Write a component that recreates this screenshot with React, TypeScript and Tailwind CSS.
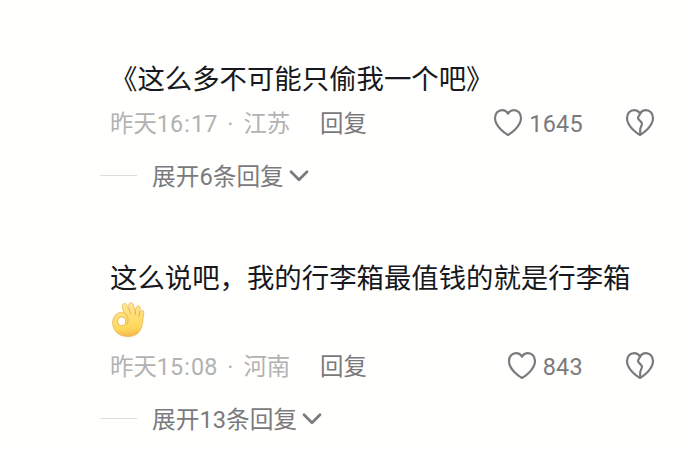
type Comment = {
  id: number;
  text: string;
  emoji?: boolean;
  hour: string;
  minute: string;
  region: string;
  likes: number;
  replies: number;
};

const comments: Comment[] = [
  {
    id: 1,
    text: "《这么多不可能只偷我一个吧》",
    hour: "16",
    minute: "17",
    region: "江苏",
    likes: 1645,
    replies: 6,
  },
  {
    id: 2,
    text: "这么说吧，我的行李箱最值钱的就是行李箱",
    emoji: true,
    hour: "15",
    minute: "08",
    region: "河南",
    likes: 843,
    replies: 13,
  },
];

const HEART =
  "M15 27C12.6 25.7 2 18.6 2 10.1C2 5.3 5.2 2.1 9 2.1C11.6 2.1 13.8 3.5 15 5.7C16.2 3.5 18.4 2.1 21 2.1C24.8 2.1 28 5.3 28 10.1C28 18.6 17.4 25.7 15 27Z";

const HeartIcon = () => (
  <svg
    viewBox="0 0 30 29"
    className="h-[29px] w-[30px]"
    fill="none"
    stroke="currentColor"
    strokeWidth="2.2"
    strokeLinejoin="round"
  >
    <path d={HEART} />
  </svg>
);

const BrokenHeartIcon = () => (
  <svg
    viewBox="0 0 30 29"
    className="h-[29px] w-[30px]"
    fill="none"
    stroke="currentColor"
    strokeWidth="2.2"
    strokeLinejoin="round"
    strokeLinecap="round"
  >
    <path d={HEART} />
    <path d="M15.4 5.2L13.1 9.2C12.8 9.9 12.9 10.4 13.4 10.9L16.5 14.4C17 15 17.1 15.6 16.9 16.3L15.2 21V26" />
  </svg>
);

const ChevronIcon = () => (
  <svg
    viewBox="0 0 20 14"
    className="h-[14px] w-[20px]"
    fill="none"
    stroke="currentColor"
    strokeWidth="2.7"
    strokeLinecap="round"
    strokeLinejoin="round"
  >
    <path d="M2 2.8L10 10.8L18 2.8" />
  </svg>
);

const OkHand = () => (
  <svg viewBox="0 0 36 38" className="h-[38px] w-[36px]">
    <defs>
      <linearGradient id="skin" x1="0.4" y1="0" x2="0.5" y2="1">
        <stop offset="0" stopColor="#ffe694" />
        <stop offset="0.75" stopColor="#ffd85a" />
        <stop offset="1" stopColor="#f5b548" />
      </linearGradient>
    </defs>
    <path
      fill="url(#skin)"
      stroke="#e9b75c"
      strokeWidth="0.8"
      d="M14.4 13C12.7 10 11.9 7.2 12.4 5.2C13 3 15.6 2.8 16.7 4.9L19.3 9.8L18.7 5.2C18.6 2.4 22.2 2 23.2 4.5L25.2 10.4L26.6 7C27.7 4.8 30.4 5.6 30.1 8.2L29.8 12.4C30.9 9.4 34 9.8 33.8 12.5L32.6 22.6C31.4 31.8 26.6 36.6 17.9 36.6C9.2 36.6 2.8 31.2 2.6 23C2.4 16.2 7.4 11.9 12.2 12.3C13.1 12.4 13.8 12.6 14.4 13Z"
    />
    <ellipse
      cx="11.7"
      cy="21.3"
      rx="4"
      ry="4.4"
      fill="#fffffd"
      stroke="#e5a94a"
      strokeWidth="0.8"
    />
    <path
      d="M19.3 9.8L20.6 13.6M25.2 10.4L25.4 14.4M29.8 12.4L28.8 16M14.4 13C18 15.4 19.4 20 16.8 24.4"
      fill="none"
      stroke="#e5a94a"
      strokeWidth="0.9"
      strokeLinecap="round"
    />
  </svg>
);

const CommentItem = ({ comment }: { comment: Comment }) => (
  <article>
    <div className="pl-[110px] text-[27.4px] leading-[42px] text-[#171820]">
      <p className="whitespace-nowrap">{comment.text}</p>
      {comment.emoji && (
        <div className="flex h-[44px] items-center">
          <OkHand />
        </div>
      )}
    </div>

    <div className="mt-2 flex h-[32px] items-center pl-[110px] font-['Roboto','Noto_Sans_CJK_SC',sans-serif] text-[23.4px] text-[#7a7a7c]">
      <div className="flex w-[210px] items-center pt-[5px] whitespace-nowrap text-[#b2b2b2]">
        <span>昨天{comment.hour}</span>
        <span className="w-[8px] text-center">:</span>
        <span>{comment.minute}</span>
        <span className="w-[26px] text-center">·</span>
        <span>{comment.region}</span>
      </div>
      <span className="pt-[5px]">回复</span>
      <div className="ml-auto flex h-[29px] items-center">
        <HeartIcon />
        <span className="ml-[6px] pt-[5px] tracking-[0.3px]">
          {comment.likes}
        </span>
      </div>
      <div className="mr-[35px] ml-[42px]">
        <BrokenHeartIcon />
      </div>
    </div>

    <div className="mt-[21px] flex h-[32px] items-center pl-[100px] font-['Roboto','Noto_Sans_CJK_SC',sans-serif] text-[23.7px] text-[#7a7a7c]">
      <span className="h-px w-[37px] bg-[#dededd]" />
      <span className="ml-[15px] pt-[5px]">展开{comment.replies}条回复</span>
      <span className="ml-[5px] pt-[2px]">
        <ChevronIcon />
      </span>
    </div>
  </article>
);

export default function App() {
  return (
    <main
      lang="zh-CN"
      className="flex h-[452px] w-[690px] flex-col gap-[64px] overflow-hidden bg-[#fffffd] pt-[56px] font-['Noto_Sans_CJK_SC',sans-serif]"
    >
      {comments.map((comment) => (
        <CommentItem key={comment.id} comment={comment} />
      ))}
    </main>
  );
}
